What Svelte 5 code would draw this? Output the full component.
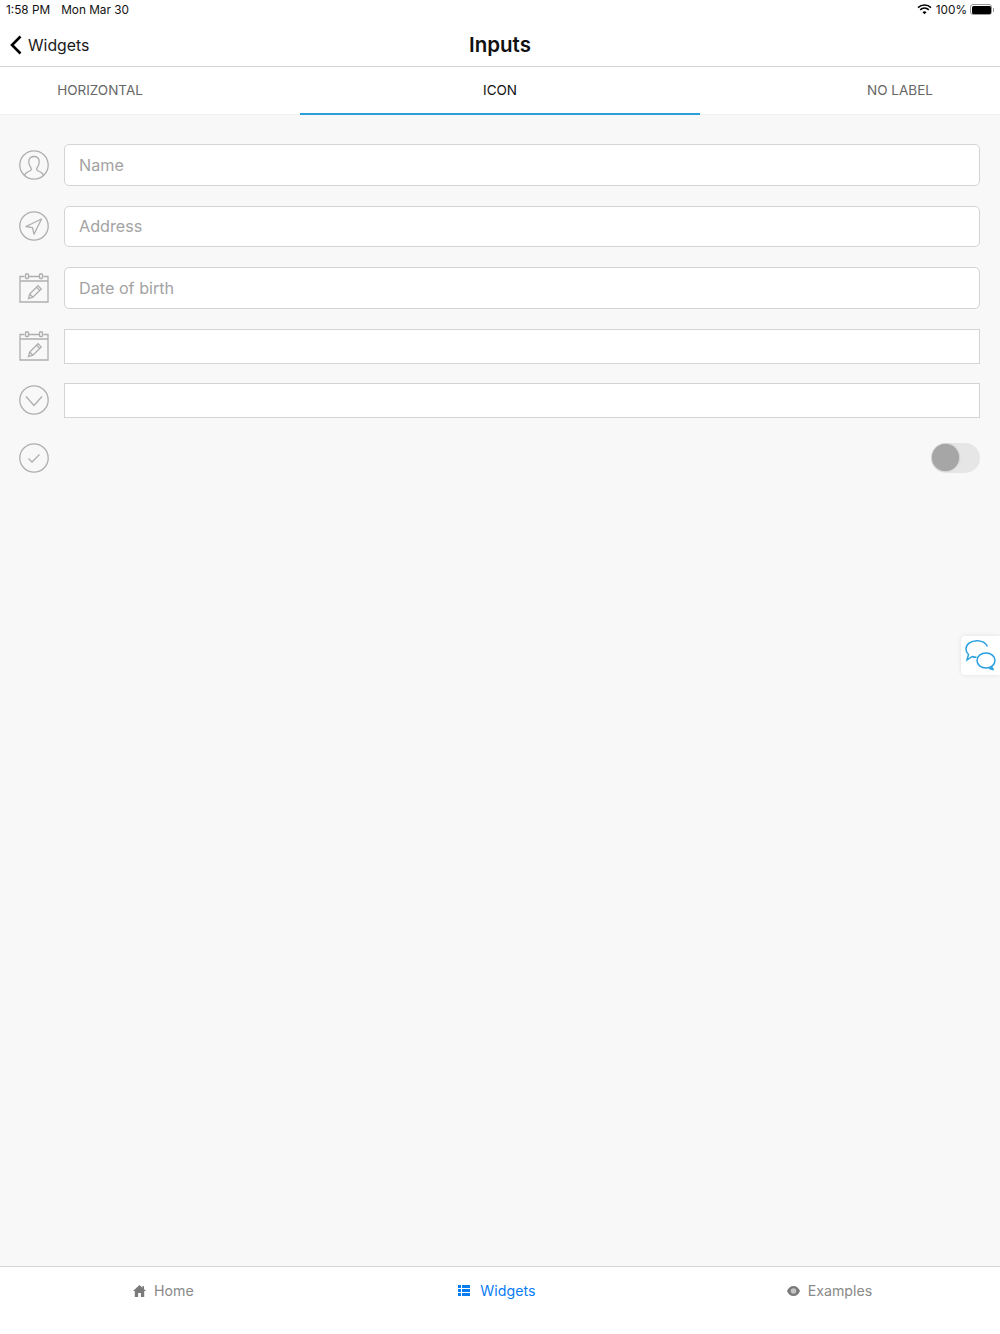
<script>
  const tabs = ['HORIZONTAL', 'ICON', 'NO LABEL'];
  let activeTab = 1;
</script>

<div class="page">
  <div class="status">
    <div class="status-left">
      <span>1:58 PM</span>
      <span>Mon Mar 30</span>
    </div>
    <div class="status-right">
      <svg class="wifi" width="15" height="11" viewBox="0 0 16 12">
        <path d="M8 11.200 5.800 8.900a3.200 3.200 0 0 1 4.400 0z" fill="#000"/>
        <path d="M3.900 7 2.700 5.700a7.600 7.600 0 0 1 10.600 0L12.100 7a5.800 5.800 0 0 0-8.200 0z" fill="#000"/>
        <path d="M1.500 4.600.3 3.300a11 11 0 0 1 15.400 0l-1.200 1.300a9.300 9.300 0 0 0-13 0z" fill="#000"/>
      </svg>
      <span>100%</span>
      <div class="battery"><div class="battery-fill"></div></div>
    </div>
  </div>

  <div class="navbar">
    <div class="back">
      <svg width="14" height="20" viewBox="0 0 14 20">
        <path d="M11.500 1.500 3 10l8.500 8.500" fill="none" stroke="#000" stroke-width="2.600"/>
      </svg>
      <span>Widgets</span>
    </div>
    <div class="title">Inputs</div>
  </div>

  <ul class="tabrow">
    {#each tabs as tab, idx}
      <li class:selected={idx === activeTab}>{tab}</li>
    {/each}
  </ul>

  <div class="content">
    <div class="row">
      <svg class="icon" width="30" height="30" viewBox="0 0 30 30">
        <circle cx="15" cy="15" r="14.200"/>
        <path d="M5.500 25.500c.6-2.200 2-3.200 4.200-4 1.800-.6 2.800-1 2.800-2.400 0-1-1.200-2-1.900-3.600-.8-1.800-1-3.400-.7-5 .5-2.500 2.800-4 5.100-4s4.600 1.500 5.100 4c.3 1.600.1 3.200-.7 5-.7 1.600-1.900 2.600-1.900 3.600 0 1.400 1 1.800 2.800 2.400 2.200.8 3.600 1.800 4.200 4"/>
      </svg>
      <div class="input rounded">Name</div>
    </div>
    <div class="row">
      <svg class="icon" width="30" height="30" viewBox="0 0 30 30">
        <circle cx="15" cy="15" r="14.200"/>
        <path d="M22.500 8 7 15.500l6.500 1.200 1.500 6.500z" stroke-linejoin="round"/>
      </svg>
      <div class="input rounded">Address</div>
    </div>
    <div class="row">
      <svg class="icon" width="30" height="30" viewBox="0 0 30 30">
        <path d="M5.500 3.500H1v25.500h28V3.500h-4.500M10 3.500h10M1 8h28"/>
        <rect x="6.500" y="1" width="3" height="4.500" rx=".8"/>
        <rect x="20.500" y="1" width="3" height="4.500" rx=".8"/>
        <path d="M9.500 25.500l1.200-4.500 8.300-8.300 3.200 3.200-8.300 8.300zM10.700 21l3.200 3.200M17.500 14.200l3.200 3.200"/>
      </svg>
      <div class="input rounded">Date of birth</div>
    </div>
    <div class="row tight">
      <svg class="icon" width="30" height="30" viewBox="0 0 30 30">
        <path d="M5.500 3.500H1v25.500h28V3.500h-4.500M10 3.500h10M1 8h28"/>
        <rect x="6.500" y="1" width="3" height="4.500" rx=".8"/>
        <rect x="20.500" y="1" width="3" height="4.500" rx=".8"/>
        <path d="M9.500 25.500l1.200-4.500 8.300-8.300 3.200 3.200-8.300 8.300zM10.700 21l3.200 3.200M17.500 14.200l3.200 3.200"/>
      </svg>
      <div class="input square"></div>
    </div>
    <div class="row">
      <svg class="icon" width="30" height="30" viewBox="0 0 30 30">
        <circle cx="15" cy="15" r="14.200"/>
        <path d="M7 11.500 15 20.500l8-9"/>
      </svg>
      <div class="input square"></div>
    </div>
    <div class="row toggle-row">
      <svg class="icon" width="30" height="30" viewBox="0 0 30 30">
        <circle cx="15" cy="15" r="14.200"/>
        <path d="M9.500 15.500l3.500 3.500 7.500-7.500"/>
      </svg>
      <div class="toggle"><div class="knob"></div></div>
    </div>
  </div>

  <div class="chat">
    <svg width="32" height="32" viewBox="0 0 32 32">
      <path d="M23.500 6.500C21.500 2.500 17.500.8 13 .8 6.500.8 2 4.500 2 9c0 2 1 4 2.500 5.500L3 20l5-3.500c1 .5 3 .8 4.500.8" fill="none" stroke="#2a9fe0" stroke-width="1.500"/>
      <ellipse cx="22" cy="20.500" rx="9" ry="7.500" fill="none" stroke="#2a9fe0" stroke-width="1.500"/>
      <path d="M27.500 26.500c.3 1.200 1 2.200 2 3.200l-4.500-1.500" fill="none" stroke="#2a9fe0" stroke-width="1.500"/>
    </svg>
  </div>

  <div class="footer">
    <div class="foot-item home">
      <svg width="13" height="12" viewBox="0 0 13 12">
        <path d="M6.500 0 0 6h1.800v6h3.300V8h2.800v4h3.300V6H13l-2-1.900V1H9.500v1.700z" fill="#7a7a7a"/>
      </svg>
      <span>Home</span>
    </div>
    <div class="foot-item widgets">
      <svg width="12" height="11" viewBox="0 0 12 11">
        <path d="M0 0h3v3H0zM4 0h8v3H4zM0 4h3v3H0zM4 4h8v3H4zM0 8h3v3H0zM4 8h8v3H4z" fill="#0a7cf2"/>
      </svg>
      <span>Widgets</span>
    </div>
    <div class="foot-item examples">
      <svg width="13" height="10" viewBox="0 0 13 10">
        <path d="M6.500 0C3.500 0 1.200 2 0 5c1.200 3 3.500 5 6.500 5S11.800 8 13 5c-1.200-3-3.500-5-6.500-5z" fill="#7a7a7a"/>
        <circle cx="6.500" cy="5" r="2.800" fill="#c4c4c4"/>
      </svg>
      <span>Examples</span>
    </div>
  </div>
</div>

<style>
  :global(body) {
    margin: 0;
    font-family: Inter, "Liberation Sans", sans-serif;
  }
  .page {
    position: relative;
    display: flex;
    flex-direction: column;
    height: 1334px;
    background: #f8f8f8;
  }
  .status {
    display: flex;
    justify-content: space-between;
    align-items: center;
    height: 20px;
    box-sizing: border-box;
    padding: 0 8px 1px 6px;
    background: #fff;
    font-size: 11.800px;
    color: #111;
  }
  .status-left {
    display: flex;
    gap: 11px;
  }
  .status-right {
    display: flex;
    align-items: center;
    gap: 3px;
  }
  .wifi {
    margin-right: 1px;
  }
  .battery {
    position: relative;
    width: 22px;
    height: 11px;
    padding: .5px;
    box-sizing: border-box;
    border: 1px solid #999;
    border-radius: 3px;
  }
  .battery:after {
    content: "";
    position: absolute;
    right: -3px;
    top: 2.500px;
    width: 1.500px;
    height: 4px;
    background: #999;
  }
  .battery-fill {
    width: 100%;
    height: 100%;
    background: #000;
    border-radius: 1.500px;
  }
  .navbar {
    position: relative;
    display: flex;
    align-items: center;
    justify-content: center;
    height: 47px;
    box-sizing: border-box;
    padding-top: 3px;
    background: #fff;
    border-bottom: 1px solid #d4d4d4;
  }
  .back {
    position: absolute;
    left: 9px;
    top: 4px;
    bottom: 0;
    display: flex;
    align-items: center;
    gap: 5px;
    font-size: 15.800px;
    color: #1a1a1a;
  }
  .title {
    font-size: 20.500px;
    font-weight: 600;
    color: #111;
  }
  .tabrow {
    display: flex;
    justify-content: space-between;
    height: 48px;
    margin: 0;
    padding: 0;
    list-style: none;
    background: #fff;
    border-bottom: 1px solid #f1f1f1;
    box-sizing: border-box;
  }
  .tabrow li {
    width: 200px;
    height: 48px;
    display: flex;
    align-items: center;
    justify-content: center;
    box-sizing: border-box;
    font-size: 13.500px;
    color: #666;
    border-bottom: 2px solid transparent;
  }
  .tabrow li.selected {
    width: 400px;
    color: #111;
    border-bottom-color: #2a9fdc;
  }
  .content {
    flex: 1;
    display: flex;
    flex-direction: column;
    padding: 29px 20px 0 19px;
  }
  .row {
    display: flex;
    align-items: center;
    gap: 15px;
    margin-bottom: 20px;
  }
  .tight {
    margin-bottom: 19px;
  }
  .toggle-row {
    justify-content: space-between;
    margin-top: 5px;
  }
  .icon {
    flex: none;
    fill: none;
    stroke: #aeaeae;
    stroke-width: 1.300;
  }
  .input {
    flex: 1;
    display: flex;
    align-items: center;
    box-sizing: border-box;
    padding: 0 14px;
    background: #fff;
    border: 1px solid #d4d4d4;
    font-size: 16.200px;
    color: #a3a3a3;
  }
  .rounded {
    height: 41.500px;
    border-radius: 5px;
  }
  .square {
    height: 35px;
  }
  .toggle {
    position: relative;
    width: 49px;
    height: 30px;
    background: #e6e6e6;
    border-radius: 15px;
  }
  .knob {
    position: absolute;
    left: 1px;
    top: 1.500px;
    width: 27px;
    height: 27px;
    background: #a6a6a6;
    border-radius: 50%;
    box-shadow: 0 0 2px rgba(0, 0, 0, 0.3);
  }
  .chat {
    position: absolute;
    top: 636px;
    right: 0;
    width: 39px;
    height: 39px;
    display: flex;
    align-items: center;
    justify-content: flex-end;
    box-sizing: border-box;
    padding-right: 4px;
    background: #fff;
    border-radius: 4px 0 0 4px;
    box-shadow: 0 0 4px rgba(0, 0, 0, 0.1);
  }
  .footer {
    display: grid;
    grid-template-columns: repeat(3, 1fr);
    height: 68px;
    box-sizing: border-box;
    padding-bottom: 20px;
    background: #fff;
    border-top: 1px solid #d4d4d4;
  }
  .foot-item {
    display: flex;
    align-items: center;
    gap: 8px;
    font-size: 14.200px;
    color: #8a8a8a;
  }
  .home {
    padding-left: 133px;
  }
  .widgets {
    padding-left: 125px;
    gap: 10px;
    color: #0a7cf2;
  }
  .examples {
    padding-left: 120px;
  }
</style>
